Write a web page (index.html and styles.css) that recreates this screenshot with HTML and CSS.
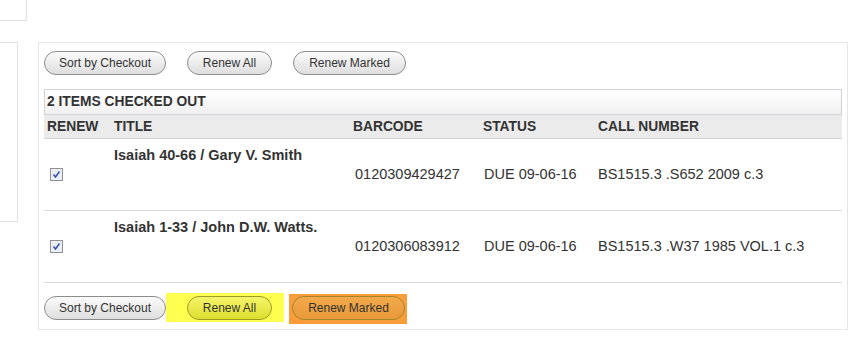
FILE: index.html
```html
<!DOCTYPE html>
<html lang="en">
<head>
  <meta charset="UTF-8" />
  <title>Checked Out Items</title>
  <link rel="stylesheet" href="styles.css">
</head>
<body>

  <div class="top-box"></div>

  <div class="page">
    <div class="side-box"></div>

    <div class="panel">
      <div class="btn-row">
        <button class="pill w-sort">Sort by Checkout</button>
        <button class="pill w-all">Renew All</button>
        <button class="pill w-marked">Renew Marked</button>
      </div>

      <div class="items-head">2 ITEMS CHECKED OUT</div>

      <table class="items">
        <thead>
          <tr>
            <th class="c-renew">RENEW</th>
            <th class="c-title">TITLE</th>
            <th class="c-barcode">BARCODE</th>
            <th class="c-status">STATUS</th>
            <th class="c-call">CALL NUMBER</th>
          </tr>
        </thead>
        <tbody>
          <tr>
            <td class="c-renew">
              <span class="check">
                <svg width="13" height="13" viewBox="0 0 13 13">
                  <rect x="0.5" y="0.5" width="12" height="12" fill="#eceef2" stroke="#909196"/>
                  <path d="M3.5 6.5 L5.5 9 L9.5 3.5" fill="none" stroke="#3550b0" stroke-width="1.5"/>
                </svg>
              </span>
            </td>
            <td class="c-title"><div class="title">Isaiah 40-66 / Gary V. Smith</div></td>
            <td class="c-barcode">0120309429427</td>
            <td class="c-status">DUE 09-06-16</td>
            <td class="c-call">BS1515.3 .S652 2009 c.3</td>
          </tr>
          <tr>
            <td class="c-renew">
              <span class="check">
                <svg width="13" height="13" viewBox="0 0 13 13">
                  <rect x="0.5" y="0.5" width="12" height="12" fill="#eceef2" stroke="#909196"/>
                  <path d="M3.5 6.5 L5.5 9 L9.5 3.5" fill="none" stroke="#3550b0" stroke-width="1.5"/>
                </svg>
              </span>
            </td>
            <td class="c-title"><div class="title">Isaiah 1-33 / John D.W. Watts.</div></td>
            <td class="c-barcode">0120306083912</td>
            <td class="c-status">DUE 09-06-16</td>
            <td class="c-call">BS1515.3 .W37 1985 VOL.1 c.3</td>
          </tr>
        </tbody>
      </table>

      <div class="btn-row bottom">
        <button class="pill w-sort sort">Sort by Checkout</button>
        <span class="mark-yellow"><button class="pill w-all yellow">Renew All</button></span>
        <span class="mark-orange"><button class="pill w-marked orange">Renew Marked</button></span>
      </div>
    </div>
  </div>

</body>
</html>
```

FILE: styles.css
```css
* {
  box-sizing: border-box;
}

body {
  margin: 0;
  font-family: "Liberation Sans", Arial, sans-serif;
  color: #333;
  background: #fff;
}

.top-box {
  width: 27px;
  height: 21px;
  border-right: 1px solid #e2e2e2;
  border-bottom: 1px solid #e2e2e2;
}

.page {
  display: flex;
  align-items: flex-start;
  margin-top: 21px;
}

.side-box {
  width: 18px;
  height: 180px;
  border: 1px solid #e2e2e2;
  border-left: none;
}

.panel {
  margin-left: 20px;
  width: 810px;
  height: 288px;
  border: 1px solid #e6e6e6;
  padding: 8px 5px 0 5px;
}

.btn-row {
  display: flex;
  gap: 21px;
}

.pill {
  height: 24px;
  padding: 0;
  font-family: "Liberation Sans", Arial, sans-serif;
  font-size: 12px;
  color: #333;
  border: 1px solid #8c8c8c;
  border-radius: 12px;
  background: linear-gradient(#fbfbfb, #dedede);
}

.w-sort { width: 122px; }
.w-all { width: 85px; }
.w-marked { width: 113px; }

.items-head {
  margin-top: 14px;
  height: 26px;
  border: 1px solid #cfd2d6;
  background: linear-gradient(#ffffff, #f0f0f0);
  font-size: 13.8px;
  font-weight: bold;
  padding: 4px 0 0 2px;
}

.items {
  width: 798px;
  border-collapse: collapse;
  font-size: 14.5px;
}

.items th {
  background: #ebebeb;
  height: 23px;
  text-align: left;
  font-size: 13.8px;
  font-weight: bold;
  padding: 1px 0 0 3px;
  border-bottom: 1px solid #d3d3d3;
}

.items td {
  height: 72px;
  padding: 0 0 0 5px;
  vertical-align: middle;
  border-bottom: 1px solid #dcdcdc;
}

.items .c-renew { width: 67px; }
.items .c-title { width: 239px; }
.items .c-barcode { width: 130px; }
.items .c-status { width: 115px; }

.items td.c-renew {
  padding-left: 6px;
}

.items td.c-title {
  vertical-align: top;
  padding: 8px 0 0 3px;
}

.items td.c-status {
  padding-left: 4px;
}

.items td.c-call {
  padding-left: 3px;
}

.title {
  font-size: 14.5px;
  font-weight: bold;
}

.check {
  display: block;
  height: 13px;
  margin-top: 1px;
}

.check svg {
  display: block;
}

.btn-row.bottom {
  gap: 0;
  align-items: flex-start;
  margin-top: 10px;
}

.sort {
  margin-top: 3px;
}

.mark-yellow {
  background: #ffff50;
  padding: 3px 12px 2px 21px;
}

.mark-orange {
  background: #f99c3a;
  margin-left: 5px;
  margin-top: 1px;
  padding: 2px 2px 4px 3px;
}

.pill.yellow {
  border-color: #9b9b26;
  background: linear-gradient(#f5f56a, #dede2e);
}

.pill.orange {
  border-color: #a1862a;
  background: linear-gradient(#f2a84a, #e99a3a);
}
```
